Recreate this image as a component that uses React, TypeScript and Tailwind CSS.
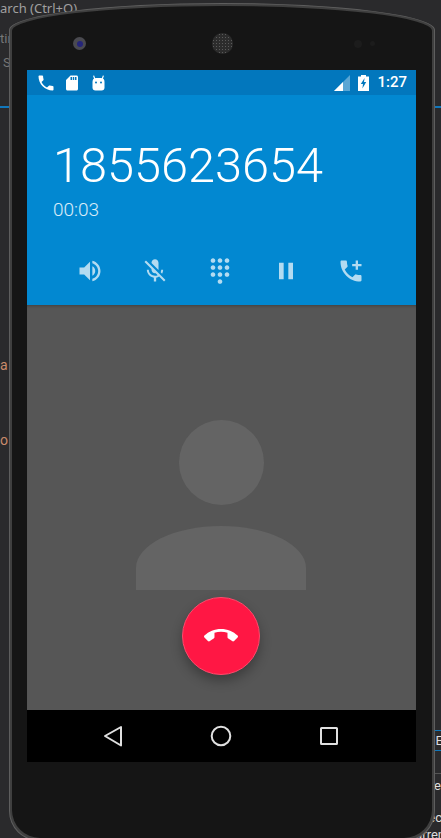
import React from "react";
import {
  MdAddIcCall,
  MdCallEnd,
  MdDialpad,
  MdMicOff,
  MdPause,
  MdPhone,
  MdSdStorage,
  MdVolumeUp,
} from "react-icons/md";

const CatIcon = () => (
  <svg width="13" height="16" viewBox="0 0 13 16" fill="none">
    <path d="M2.8 4 L1.6 0.6 M10.2 4 L11.4 0.6" stroke="#fff" strokeWidth="1.2" />
    <path
      d="M0.5 7 Q0.5 3 4 3 H9 Q12.5 3 12.5 7 V12.5 Q12.5 15.5 9.5 15.5 H3.5 Q0.5 15.5 0.5 12.5 Z"
      fill="#fff"
    />
    <circle cx="4" cy="7.6" r="1" fill="#0277bd" />
    <circle cx="9" cy="7.6" r="1" fill="#0277bd" />
  </svg>
);

const SignalIcon = () => (
  <svg width="16" height="16" viewBox="0 0 16 16">
    <path d="M0 16 L16 0 V16 Z" fill="#fff" fillOpacity="0.35" />
    <path d="M0 16 L9 7 V16 Z" fill="#fff" />
  </svg>
);

const BatteryIcon = () => (
  <svg width="11" height="16" viewBox="0 0 11 16">
    <path d="M3 0 H8 V1.5 H11 V16 H0 V1.5 H3 Z" fill="#fff" />
    <path d="M6.6 3 L2.8 9 H5 L4.4 13.4 L8.2 7 H6 Z" fill="#0277bd" />
  </svg>
);

const StatusBar = () => (
  <div className="flex h-[25px] items-center bg-[#0277bd] pl-[10px] pr-[9px] text-white">
    <MdPhone size={20} className="ml-[-1px]" />
    <MdSdStorage size={18} className="ml-[7px]" />
    <div className="ml-[11px]">
      <CatIcon />
    </div>
    <div className="ml-auto">
      <SignalIcon />
    </div>
    <div className="ml-[8px]">
      <BatteryIcon />
    </div>
    <span className="ml-[8px] font-['Roboto',sans-serif] text-[15px] font-medium leading-none">
      1:27
    </span>
  </div>
);

const CallHeader = () => (
  <div className="flex h-[210px] flex-col bg-[#0288d1] font-['Roboto',sans-serif] text-white">
    <div className="mt-[41px] pl-[26px] text-[48.7px] font-light leading-[60px]">
      1855623654
    </div>
    <div className="mt-[-1px] pl-[26px] text-[19px] font-light leading-[30px] text-white/85">
      00:03
    </div>
    <div className="mt-[32px] grid grid-cols-5 pl-[30px] pr-[32px] text-white/70">
      <div className="flex justify-center">
        <MdVolumeUp size={28} />
      </div>
      <div className="flex justify-center">
        <MdMicOff size={28} />
      </div>
      <div className="flex justify-center">
        <MdDialpad size={28} />
      </div>
      <div className="flex justify-center">
        <MdPause size={28} />
      </div>
      <div className="flex justify-center">
        <MdAddIcCall size={28} />
      </div>
    </div>
  </div>
);

const ContactArea = () => (
  <div className="relative flex h-[405px] flex-col items-center bg-[#565656] pt-[115px] shadow-[inset_0_3px_3px_-2px_rgba(0,0,0,0.25)]">
    <div className="h-[85px] w-[85px] rounded-full bg-[#646464]" />
    <div className="ml-[-1px] mt-[21px] h-[64px] w-[170px] rounded-t-[85px_42px] bg-[#646464]" />
    <button className="absolute left-[155px] top-[292px] flex h-[78px] w-[78px] items-center justify-center rounded-full border border-[#ff4a6c] bg-[#ff1744] text-white shadow-[0_6px_12px_rgba(0,0,0,0.3)]">
      <MdCallEnd size={34} />
    </button>
  </div>
);

const NavBar = () => (
  <div className="flex h-[52px] items-center bg-black">
    <svg width="389" height="52" viewBox="0 0 389 52" fill="none" stroke="#e0e0e0" strokeWidth="2">
      <path d="M78 26 L94 17 V35.5 Z" strokeLinejoin="round" />
      <circle cx="194" cy="26" r="9.3" />
      <rect x="294" y="18" width="16" height="16" rx="0.5" />
    </svg>
  </div>
);

const PhoneTop = () => (
  <div className="flex h-[63px] items-center pt-[10px]">
    <div className="ml-[46px] flex h-[13px] w-[13px] items-center justify-center rounded-full bg-[#4a4a50]">
      <div className="h-[6px] w-[6px] rounded-full bg-[#25257a]" />
    </div>
    <div className="ml-[126px] h-[21px] w-[21px] rounded-full bg-[#2c2c2c] bg-[radial-gradient(#5a5a5a_1px,transparent_1px)] bg-[length:3px_3px]" />
    <div className="ml-[121px] h-[8px] w-[8px] rounded-full bg-[#1c1c1c]" />
    <div className="ml-[8px] h-[5px] w-[5px] rounded-full bg-[#1c1c1c]" />
  </div>
);

export default function App() {
  return (
    <div className="relative h-[838px] w-[441px] overflow-hidden bg-[#2a2a2c] font-['Roboto',sans-serif]">
      {/* IDE fragments showing behind the emulator */}
      <span className="absolute left-0 top-[-1px] font-['Noto_Sans',sans-serif] text-[13px] text-[#a0a0a0]">
        arch (Ctrl+Q)
      </span>
      <span className="absolute left-0 top-[29px] text-[13px] text-[#777]">tin</span>
      <span className="absolute left-[3px] top-[53px] text-[13px] text-[#777]">S</span>
      <div className="absolute left-0 top-[106px] h-[2px] w-[10px] bg-[#1177bb]" />
      <div className="absolute right-0 top-[106px] h-[2px] w-[8px] bg-[#1177bb]" />
      <span className="absolute left-0 top-[355px] text-[14px] text-[#c98a6b]">a</span>
      <span className="absolute left-0 top-[430px] text-[14px] text-[#c98a6b]">o</span>
      <div className="absolute right-0 top-[730px] h-[21px] w-[6px] border-y border-[#1177bb]" />
      <span className="absolute right-[-2px] top-[731px] text-[13px] text-[#ddd]">E</span>
      <div className="absolute right-0 top-[773px] h-px w-[6px] bg-[#555]" />
      <span className="absolute right-0 top-[776px] text-[13px] text-[#ddd]">e</span>
      <span className="absolute right-[-1px] top-[808px] text-[13px] text-[#ddd]">ec</span>
      <span className="absolute right-[-4px] top-[825px] text-[13px] text-[#ddd]">urren</span>

      {/* emulator body */}
      <div className="absolute left-[9px] top-[3px] h-[838px] w-[426px] rounded-t-[213px_27px] rounded-b-[30px] border border-[#5e5e5e] bg-[#3f3f3f] p-[2px]">
        <div className="h-full rounded-t-[210px_25px] rounded-b-[28px] bg-[#151515] px-[15px] pt-[1px]">
          <PhoneTop />
          <div className="w-[389px]">
            <StatusBar />
            <CallHeader />
            <ContactArea />
            <NavBar />
          </div>
        </div>
      </div>
    </div>
  );
}
